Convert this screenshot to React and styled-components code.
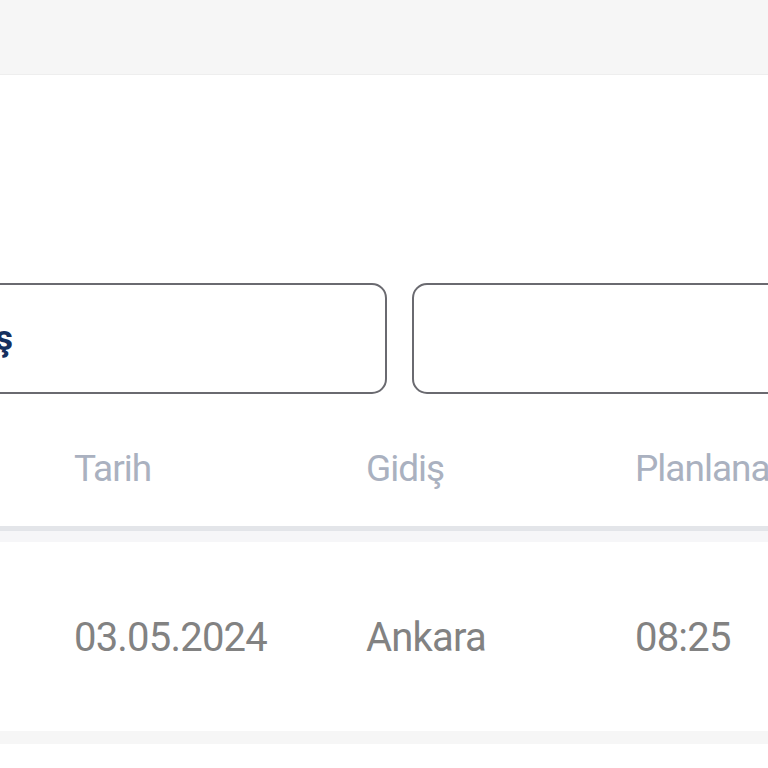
import React from "react";
import styled, { createGlobalStyle } from "styled-components";

const Global = createGlobalStyle`
  html, body { margin: 0; padding: 0; background: #ffffff; }
  body { font-family: Roboto, "Liberation Sans", sans-serif; overflow: hidden; }
`;

const Page = styled.div`
  width: 768px;
  height: 768px;
  overflow: hidden;
  display: flex;
  flex-direction: column;
  background: #ffffff;
`;

const TopBar = styled.div`
  height: 74px;
  flex: none;
  background: #f6f6f6;
  border-bottom: 1px solid #eeeeee;
`;

const Filters = styled.div`
  display: grid;
  grid-template-columns: 587px 587px;
  column-gap: 25px;
  margin-left: -200px;
  margin-top: 208px;
  flex: none;
`;

const Field = styled.div`
  height: 111px;
  box-sizing: border-box;
  border: 2.5px solid #6a6a70;
  border-radius: 15px;
  background: #ffffff;
  display: flex;
  align-items: center;
  justify-content: flex-end;
  padding-right: ${(p) => p.$padRight}px;
  font-size: 35px;
  font-weight: 700;
  color: #15305f;
`;

const Row = styled.div`
  display: grid;
  grid-template-columns: 292px 269px 1fr;
  padding-left: 74px;
  padding-top: ${(p) => p.$padTop}px;
  box-sizing: border-box;
  align-items: center;
  flex: none;
  height: ${(p) => p.$h}px;
  font-size: ${(p) => p.$size}px;
  color: ${(p) => p.$color};
  letter-spacing: ${(p) => p.$ls}px;
  white-space: nowrap;
`;

const HeadDivider = styled.div`
  height: 5px;
  background: #e3e5e9;
  flex: none;
  border-bottom: 11px solid #f6f6f8;
`;

const BottomBand = styled.div`
  height: 13px;
  background: #f6f6f6;
  flex: none;
`;

export default function App() {
  return (
    <Page>
      <Global />
      <TopBar />
      <Filters>
        <Field $padRight={372}>ş</Field>
        <Field $padRight={0} />
      </Filters>
      <Row $h={132} $padTop={17} $size={37} $ls={-1} $color="#aab1c0">
        <span>Tarih</span>
        <span>Gidiş</span>
        <span>Planlanan</span>
      </Row>
      <HeadDivider />
      <Row $h={189} $padTop={2} $size={40} $ls={-0.8} $color="#828282">
        <span>03.05.2024</span>
        <span>Ankara</span>
        <span>08:25</span>
      </Row>
      <BottomBand />
    </Page>
  );
}
